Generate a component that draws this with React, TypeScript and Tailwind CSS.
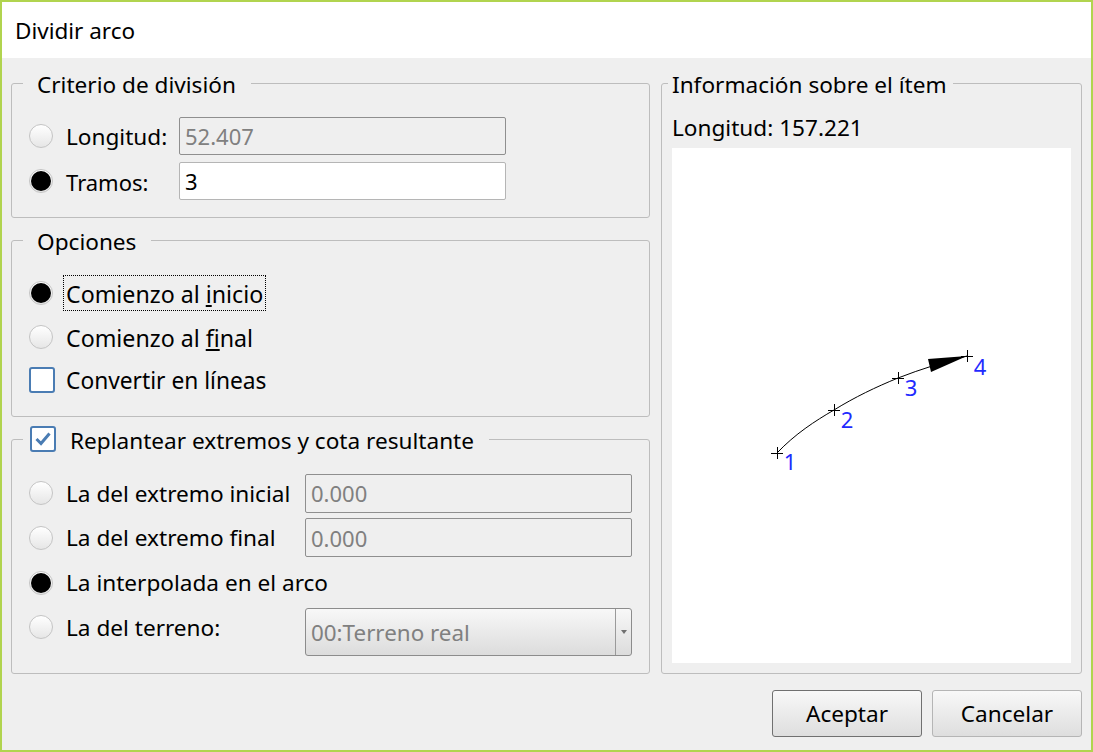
function Radio({ checked }: { checked?: boolean }) {
  return (
    <span className="flex h-6 w-6 shrink-0 items-center justify-center rounded-full border border-[#c4c4c4] bg-gradient-to-b from-white to-[#e6e6e6]">
      {checked && <span className="h-[20px] w-[20px] rounded-full bg-black" />}
    </span>
  );
}

function Check({ checked }: { checked?: boolean }) {
  return (
    <span className="flex h-[26px] w-[26px] shrink-0 items-center justify-center rounded-[3px] border-2 border-[#4a7cb3] bg-white">
      {checked && (
        <svg width="16" height="14" viewBox="0 0 16 14" fill="none">
          <path d="M1.5 7 L6 11.5 L14.5 1.5" stroke="#4a7cb3" strokeWidth="3" />
        </svg>
      )}
    </span>
  );
}

function Field({ value, disabled, className }: { value: string; disabled?: boolean; className: string }) {
  return (
    <div
      className={
        disabled
          ? "flex items-center rounded-[2px] border border-[#8f8f8f] bg-[#efefef] pl-[5px] pt-[1px] text-[22px] text-[#808080] " + className
          : "flex items-center rounded-[2px] border border-[#b5b5b5] bg-white pl-[5px] pt-[1px] text-[22px] text-black " + className
      }
    >
      {value}
    </div>
  );
}

function Group({ legend, children, className }: { legend: React.ReactNode; children: React.ReactNode; className: string }) {
  return (
    <fieldset className={"rounded-[3px] border border-[#bdbdbd] " + className}>
      <legend className="ml-[11px] h-[30px] pl-[14px] pr-[15px]">
        <span className="relative top-[2px] flex h-[30px] items-center">{legend}</span>
      </legend>
      {children}
    </fieldset>
  );
}

function Row({ checked, label, className, children }: { checked?: boolean; label: React.ReactNode; className: string; children?: React.ReactNode }) {
  return (
    <div className={"flex items-center " + className}>
      <Radio checked={checked} />
      <span className="ml-[13px] w-[239px] shrink-0 whitespace-nowrap pt-[1px]">{label}</span>
      {children}
    </div>
  );
}

function Arc() {
  return (
    <svg width="399" height="515" viewBox="672 148 399 515" className="block">
      <path d="M777 453 C795 434 815 421 834 410 C855 397 876 387 898 378 C921 369 944 362 967 356" fill="none" stroke="#000" strokeWidth="1" />
      <polygon points="928,359 967,356 931,372" fill="#000" />
      {[
        [777, 453],
        [834, 410],
        [898, 378],
        [967, 356],
      ].map(([x, y]) => (
        <path key={x} d={`M${x - 6} ${y}H${x + 6}M${x} ${y - 6}V${y + 6}`} stroke="#000" strokeWidth="1" shapeRendering="crispEdges" />
      ))}
      {[
        ["1", 790, 470],
        ["2", 847, 428],
        ["3", 911, 396],
        ["4", 980, 375],
      ].map(([t, x, y]) => (
        <text key={t} x={x} y={y} textAnchor="middle" fill="#1f2bff" fontSize="22">
          {t}
        </text>
      ))}
    </svg>
  );
}

export default function App() {
  return (
    <div className="h-[752px] w-[1093px] border-2 border-[#b1d44f] bg-[#efefef] font-['Noto_Sans',sans-serif] text-[22.6px] text-black">
      <div className="flex h-[56px] items-center bg-white pl-[13px] pt-[1px] text-[22.5px]">Dividir arco</div>

      <div className="flex gap-[11px] px-[9px] pt-[10px]">
        <div className="flex w-[639px] flex-col gap-[7px]">
          <Group legend="Criterio de división" className="h-[150px]">
            <div className="flex flex-col gap-[7px] pl-[17px] pt-[19px]">
              <div className="flex items-center">
                <Radio />
                <span className="ml-[13px] w-[113px] pt-[2px]">Longitud:</span>
                <Field value="52.407" disabled className="h-[38px] w-[327px]" />
              </div>
              <div className="flex items-center">
                <Radio checked />
                <span className="ml-[13px] w-[113px] pt-[2px] text-[22px]">Tramos:</span>
                <Field value="3" className="h-[38px] w-[327px]" />
              </div>
            </div>
          </Group>

          <Group legend="Opciones" className="h-[192px]">
            <div className="flex flex-col pl-[17px] pt-[16px] text-[23.2px]">
              <div className="flex h-[44px] items-center">
                <Radio checked />
                <span className="ml-[10px] h-[36px] border border-dotted border-black px-[2px] pt-[2px] leading-[32px]">
                  Comienzo al <span className="underline">i</span>nicio
                </span>
              </div>
              <div className="flex h-[44px] items-center">
                <Radio />
                <span className="ml-[13px] pt-[2px]">
                  Comienzo al <span className="underline">f</span>inal
                </span>
              </div>
              <div className="flex h-[42px] items-center">
                <Check />
                <span className="ml-[11px] pt-[3px] text-[22.75px]">Convertir en líneas</span>
              </div>
            </div>
          </Group>

          <Group
            legend={
              <span className="-ml-[7px] flex items-center gap-[14px]">
                <span className="-mt-[4px]">
                  <Check checked />
                </span>
                Replantear extremos y cota resultante
              </span>
            }
            className="h-[250px]"
          >
            <div className="flex flex-col pl-[17px] pt-[17px]">
              <Row label="La del extremo inicial" className="h-[44px]">
                <Field value="0.000" disabled className="h-[39px] w-[327px]" />
              </Row>
              <Row label="La del extremo final" className="h-[45px]">
                <Field value="0.000" disabled className="h-[39px] w-[327px]" />
              </Row>
              <Row checked label="La interpolada en el arco" className="h-[45px]" />
              <Row label="La del terreno:" className="h-[44px]">
                <div className="mt-[9px] flex h-[48px] w-[327px] items-stretch rounded-[3px] border border-[#8c8c8c] bg-gradient-to-b from-[#f8f8f8] to-[#dcdcdc] text-[22.4px] text-[#808080]">
                  <span className="flex flex-1 items-center pl-[5px] pt-[3px]">00:Terreno real</span>
                  <span className="flex w-[16px] items-center justify-center border-l border-[#9a9a9a]">
                    <span className="h-0 w-0 border-x-[3.5px] border-t-[4px] border-x-transparent border-t-[#707070]" />
                  </span>
                </div>
              </Row>
            </div>
          </Group>
        </div>

        <Group legend="Información sobre el ítem" className="h-[606px] w-[421px] [&>legend]:ml-[6px] [&>legend]:pl-[4px] [&>legend]:pr-[6px]">
          <div className="px-[10px]">
            <div className="flex h-[50px] items-center pt-[10px]">Longitud: 157.221</div>
            <div className="bg-white">
              <Arc />
            </div>
          </div>
        </Group>
      </div>

      <div className="flex justify-end gap-[10px] pr-[9px] pt-[16px]">
        <button className="h-[47px] w-[150px] rounded-[3px] border border-[#707070] bg-gradient-to-b from-[#f8f8f8] to-[#dedede] pt-[1px]">
          Aceptar
        </button>
        <button className="h-[47px] w-[150px] rounded-[3px] border border-[#b5b5b5] bg-gradient-to-b from-[#f8f8f8] to-[#dedede] pt-[1px]">
          Cancelar
        </button>
      </div>
    </div>
  );
}
